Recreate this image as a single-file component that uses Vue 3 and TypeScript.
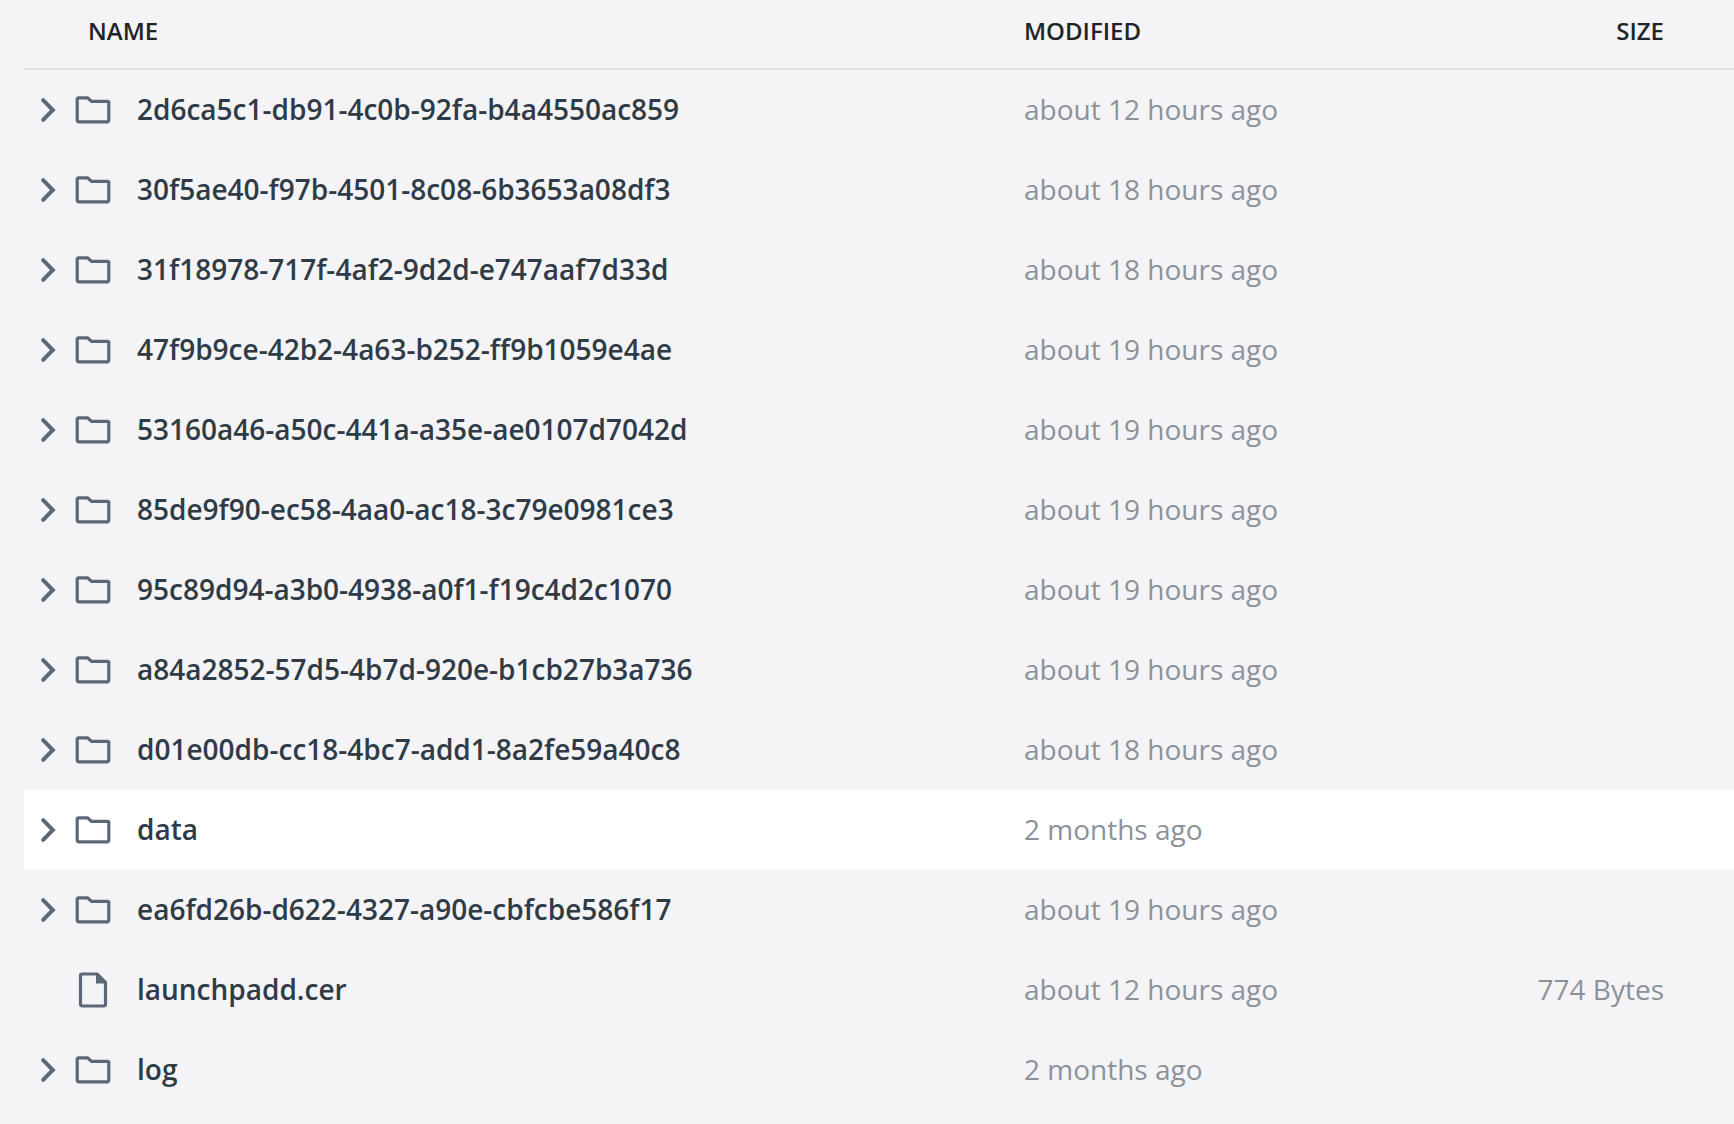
<script setup lang="ts">
interface Entry { name: string; modified: string; size?: string; kind: 'folder' | 'file'; active?: boolean }
const entries: Entry[] = [
  { name: '2d6ca5c1-db91-4c0b-92fa-b4a4550ac859', modified: 'about 12 hours ago', kind: 'folder' },
  { name: '30f5ae40-f97b-4501-8c08-6b3653a08df3', modified: 'about 18 hours ago', kind: 'folder' },
  { name: '31f18978-717f-4af2-9d2d-e747aaf7d33d', modified: 'about 18 hours ago', kind: 'folder' },
  { name: '47f9b9ce-42b2-4a63-b252-ff9b1059e4ae', modified: 'about 19 hours ago', kind: 'folder' },
  { name: '53160a46-a50c-441a-a35e-ae0107d7042d', modified: 'about 19 hours ago', kind: 'folder' },
  { name: '85de9f90-ec58-4aa0-ac18-3c79e0981ce3', modified: 'about 19 hours ago', kind: 'folder' },
  { name: '95c89d94-a3b0-4938-a0f1-f19c4d2c1070', modified: 'about 19 hours ago', kind: 'folder' },
  { name: 'a84a2852-57d5-4b7d-920e-b1cb27b3a736', modified: 'about 19 hours ago', kind: 'folder' },
  { name: 'd01e00db-cc18-4bc7-add1-8a2fe59a40c8', modified: 'about 18 hours ago', kind: 'folder' },
  { name: 'data', modified: '2 months ago', kind: 'folder', active: true },
  { name: 'ea6fd26b-d622-4327-a90e-cbfcbe586f17', modified: 'about 19 hours ago', kind: 'folder' },
  { name: 'launchpadd.cer', modified: 'about 12 hours ago', size: '774 Bytes', kind: 'file' },
  { name: 'log', modified: '2 months ago', kind: 'folder' },
]
</script>

<template>
  <div class="page">
    <div class="head">
      <span>NAME</span>
      <span>MODIFIED</span>
      <span class="end">SIZE</span>
    </div>
    <div v-for="e in entries" :key="e.name" class="row" :class="{ active: e.active }">
      <div class="icons">
        <svg v-if="e.kind === 'folder'" class="chev" width="16" height="26" viewBox="0 0 16 26">
          <path d="M3.200 3.200 12.800 13 3.200 22.800" fill="none" stroke="#5c6877" stroke-width="4" stroke-linecap="round" />
        </svg>
        <span v-else class="chev-gap"></span>
        <svg v-if="e.kind === 'folder'" class="type" width="36" height="28" viewBox="0 0 36 28">
          <path d="M2.200 3a1.200 1.200 0 0 1 1.200-1.200h9.300l3.700 3.600h16.200a1.200 1.200 0 0 1 1.200 1.200v17.200a2 2 0 0 1-2 2H4.200a2 2 0 0 1-2-2z" fill="none" stroke="#5c6877" stroke-width="3.200" stroke-linejoin="round" />
        </svg>
        <svg v-else class="type" width="36" height="36" viewBox="0 0 36 36">
          <path d="M5.500 3.500a1.500 1.500 0 0 1 1.500-1.500H22l8.500 8.500V32a2 2 0 0 1-2 2H7.500a2 2 0 0 1-2-2z" fill="none" stroke="#5c6877" stroke-width="3.200" stroke-linejoin="round" />
          <path d="M21 1.500 31 11.500H21z" fill="#5c6877" />
        </svg>
      </div>
      <span class="name">{{ e.name }}</span>
      <span class="meta">{{ e.modified }}</span>
      <span class="meta end">{{ e.size }}</span>
    </div>
  </div>
</template>

<style>
html, body { margin: 0; background: #f4f4f6; }
</style>

<style scoped>
.page {
  width: 1734px;
  height: 1124px;
  overflow: hidden;
  box-sizing: border-box;
  padding-left: 24px;
  background: #f4f4f6;
  font-family: "Open Sans", sans-serif;
}
.head {
  display: grid;
  grid-template-columns: 936px 1fr auto;
  align-items: center;
  box-sizing: border-box;
  height: 70px;
  padding: 0 70px 8px 64px;
  border-bottom: 2px solid #dfe1e4;
  font-size: 24px;
  font-weight: 600;
  color: #1f2429;
}
.row {
  display: grid;
  grid-template-columns: 113px 887px 1fr auto;
  align-items: center;
  height: 80px;
  padding-right: 70px;
}
.row.active { background: #fff; }
.icons { display: flex; align-items: center; padding-left: 16px; }
.chev { flex: none; }
.chev-gap { width: 16px; flex: none; }
.type { flex: none; margin-left: 19px; }
.name { font-size: 28px; font-weight: 600; color: #2f3b46; white-space: nowrap; margin-bottom: 2px; }
.meta { font-size: 28px; color: #8b929a; white-space: nowrap; margin-bottom: 2px; }
.end { text-align: right; }
</style>
